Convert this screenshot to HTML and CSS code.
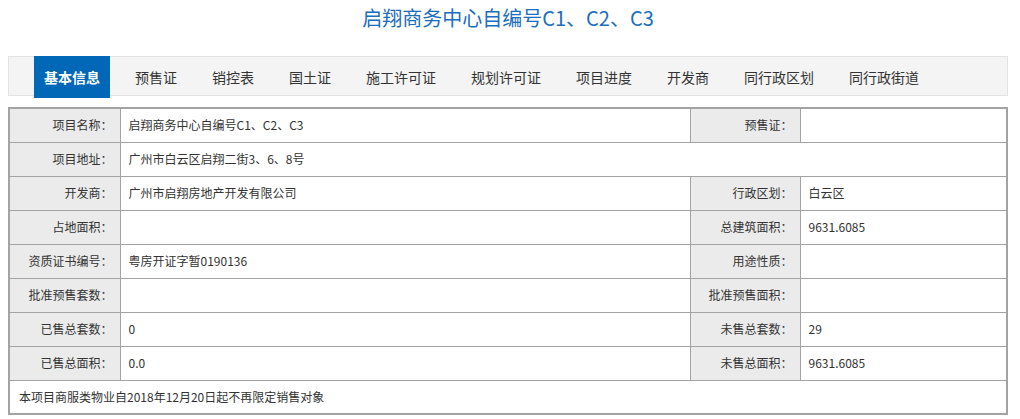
FILE: index.html
```html
<!DOCTYPE html>
<html lang="zh-CN">
<head>
    <meta charset="UTF-8">
    <title>启翔商务中心自编号C1、C2、C3</title>
    <link rel="stylesheet" href="styles.css">
</head>
<body>
    <div class="wrap">
        <!-- 标题 -->
        <h1 class="page-title">启翔商务中心自编号C1、C2、C3</h1>

        <!-- 选项卡 -->
        <div class="tabs">
            <ul>
                <li class="active"><a href="#">基本信息</a></li>
                <li><a href="#">预售证</a></li>
                <li><a href="#">销控表</a></li>
                <li><a href="#">国土证</a></li>
                <li><a href="#">施工许可证</a></li>
                <li><a href="#">规划许可证</a></li>
                <li><a href="#">项目进度</a></li>
                <li><a href="#">开发商</a></li>
                <li><a href="#">同行政区划</a></li>
                <li><a href="#">同行政街道</a></li>
            </ul>
        </div>

        <!-- 基本信息表 -->
        <table class="info-table">
            <colgroup>
                <col class="c-label">
                <col class="c-value">
                <col class="c-label2">
                <col>
            </colgroup>
            <tr>
                <td class="label">项目名称：</td>
                <td>启翔商务中心自编号C1、C2、C3</td>
                <td class="label">预售证：</td>
                <td></td>
            </tr>
            <tr>
                <td class="label">项目地址：</td>
                <td colspan="3">广州市白云区启翔二街3、6、8号</td>
            </tr>
            <tr>
                <td class="label">开发商：</td>
                <td>广州市启翔房地产开发有限公司</td>
                <td class="label">行政区划：</td>
                <td>白云区</td>
            </tr>
            <tr>
                <td class="label">占地面积：</td>
                <td></td>
                <td class="label">总建筑面积：</td>
                <td>9631.6085</td>
            </tr>
            <tr>
                <td class="label">资质证书编号：</td>
                <td>粤房开证字暂0190136</td>
                <td class="label">用途性质：</td>
                <td></td>
            </tr>
            <tr>
                <td class="label">批准预售套数：</td>
                <td></td>
                <td class="label">批准预售面积：</td>
                <td></td>
            </tr>
            <tr>
                <td class="label">已售总套数：</td>
                <td>0</td>
                <td class="label">未售总套数：</td>
                <td>29</td>
            </tr>
            <tr>
                <td class="label">已售总面积：</td>
                <td>0.0</td>
                <td class="label">未售总面积：</td>
                <td>9631.6085</td>
            </tr>
            <tr>
                <td colspan="4" class="note">本项目商服类物业自2018年12月20日起不再限定销售对象</td>
            </tr>
        </table>
    </div>
</body>
</html>
```

FILE: styles.css
```css
/* Basic reset */
* {
    box-sizing: border-box;
}

body {
    margin: 8px;
    font-family: "Noto Sans CJK SC", "Noto Sans", sans-serif;
    font-size: 12px;
    color: #333;
    background: #fff;
}

.wrap {
    width: 1000px;
}

/* 标题 */
.page-title {
    margin: 0 0 28px;
    font-size: 20px;
    font-weight: normal;
    line-height: 20px;
    text-align: center;
    color: #1b6dbd;
}

/* 选项卡 */
.tabs {
    height: 40px;
    background-color: #f4f4f4;
    border: 1px solid #e3e3e3;
    padding-left: 25px;
}

.tabs ul {
    list-style: none;
    margin: -1px 0 0;
    padding: 0;
    display: flex;
    gap: 15px;
}

.tabs li a {
    display: block;
    height: 42px;
    line-height: 42px;
    padding: 0 10px;
    font-size: 14px;
    color: #333;
    text-decoration: none;
}

.tabs li.active a {
    background-color: #0068b7;
    color: #fff;
    font-weight: bold;
}

/* 信息表 */
.info-table {
    width: 1000px;
    margin-top: 11px;
    border-collapse: collapse;
    border: 2px solid #a3a3a3;
    table-layout: fixed;
}

.c-label {
    width: 111px;
}

.c-value {
    width: 570px;
}

.c-label2 {
    width: 110px;
}

.info-table td {
    height: 34px;
    padding: 0 8px;
    border: 1px solid #a3a3a3;
    line-height: 16px;
    vertical-align: middle;
}

.info-table td.label {
    background-color: #ebebeb;
    text-align: right;
    padding-right: 7px;
}

.info-table td.note {
    padding-left: 9px;
}
```
